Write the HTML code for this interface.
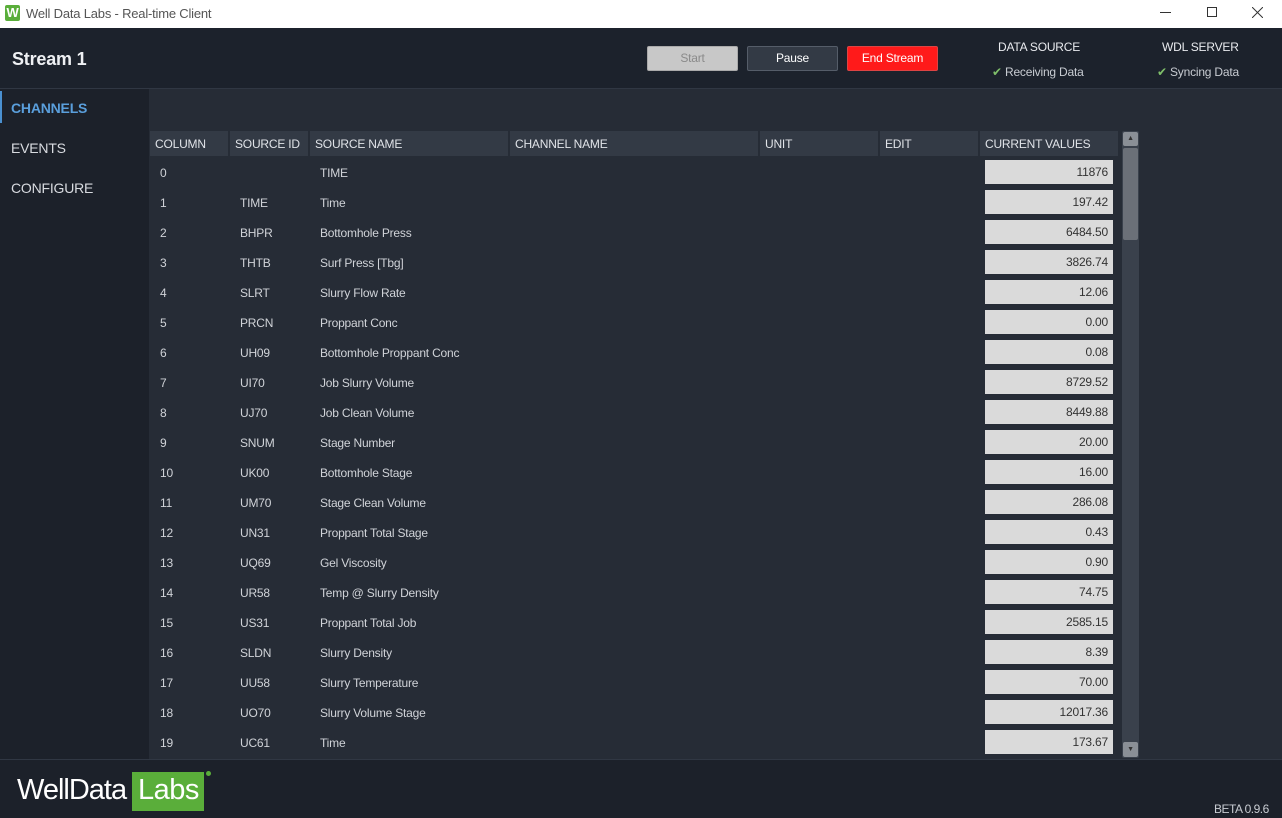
<!DOCTYPE html>
<html><head><style>
*{margin:0;padding:0;box-sizing:border-box}
body{width:1282px;height:818px;overflow:hidden;font-family:"Liberation Sans",sans-serif;background:#262c36;position:relative;color:#d8dbe0;letter-spacing:-0.2px}
.abs{position:absolute}
#tb{left:0;top:0;width:1282px;height:28px;background:#fff;color:#555;font-size:13px}
#hd{left:0;top:28px;width:1282px;height:61px;background:#1c222c;border-bottom:1px solid #303743}
#sb{left:0;top:89px;width:149px;height:671px;background:#1c212a}
#ft{left:0;top:759px;width:1282px;height:59px;background:#1c212a;border-top:1px solid #303743}
.btn{top:46px;height:25px;width:91px;font-size:12px;text-align:center;line-height:23px;border-radius:2px}
.th{top:131px;height:25px;background:#333a45;font-size:12px;line-height:26px;padding-left:5px;color:#e0e3e8}
.c{font-size:12px;color:#d0d3d8}
.v{left:985px;width:128px;height:24px;background:#dadada;color:#333;font-size:12px;text-align:right;padding-right:5px;line-height:25px}
</style></head><body>
<div id="tb" class="abs">
<div class="abs" style="left:5px;top:5px;width:15px;height:16px;background:#5aae3a;color:#fff;font-weight:bold;font-size:13px;text-align:center;line-height:16px;border-radius:2px">W</div>
<div class="abs" style="left:26px;top:6px">Well Data Labs - Real-time Client</div>
<div class="abs" style="left:1160px;top:12px;width:11px;height:1px;background:#333"></div>
<div class="abs" style="left:1207px;top:7px;width:10px;height:10px;border:1px solid #333"></div>
<svg class="abs" style="left:1252px;top:7px" width="11" height="11"><path d="M0 0L11 11M11 0L0 11" stroke="#333" stroke-width="1"/></svg>
</div>
<div id="hd" class="abs">
<div class="abs" style="left:12px;top:21px;font-size:18px;font-weight:bold;color:#eef0f3">Stream 1</div>
</div>
<div class="abs btn" style="left:647px;background:#c8c8c8;color:#8a8a8a;border:1px solid #aaa">Start</div>
<div class="abs btn" style="left:747px;background:#333a45;color:#fff;border:1px solid #555d69">Pause</div>
<div class="abs btn" style="left:847px;background:#ff1a1a;color:#fff;border:1px solid #d44">End Stream</div>
<div class="abs" style="left:998px;top:40px;font-size:12px;color:#e8eaee">DATA SOURCE</div>
<div class="abs" style="left:992px;top:65px;font-size:12px;color:#c8ccd2"><span style="color:#7fbf6a">✔</span> Receiving Data</div>
<div class="abs" style="left:1162px;top:40px;font-size:12px;color:#e8eaee">WDL SERVER</div>
<div class="abs" style="left:1157px;top:65px;font-size:12px;color:#c8ccd2"><span style="color:#7fbf6a">✔</span> Syncing Data</div>
<div id="sb" class="abs">
<div class="abs" style="left:0;top:2px;width:2px;height:32px;background:#4a90d0"></div>
<div class="abs" style="left:11px;top:11px;font-size:14px;font-weight:bold;color:#5a9fdc">CHANNELS</div>
<div class="abs" style="left:11px;top:51px;font-size:14px;color:#d8dbe0">EVENTS</div>
<div class="abs" style="left:11px;top:91px;font-size:14px;color:#d8dbe0">CONFIGURE</div>
</div>
<div class="abs th" style="left:150px;width:78px">COLUMN</div>
<div class="abs th" style="left:230px;width:78px">SOURCE ID</div>
<div class="abs th" style="left:310px;width:198px">SOURCE NAME</div>
<div class="abs th" style="left:510px;width:248px">CHANNEL NAME</div>
<div class="abs th" style="left:760px;width:118px">UNIT</div>
<div class="abs th" style="left:880px;width:98px">EDIT</div>
<div class="abs th" style="left:980px;width:138px">CURRENT VALUES</div>
<div class="abs" style="left:1122px;top:131px;width:17px;height:627px;background:#3a414c;border-radius:2px"></div>
<div class="abs" style="left:1123px;top:132px;width:15px;height:14px;background:#8a8f96;border-radius:2px;font-size:7px;text-align:center;line-height:14px;color:#333">▲</div>
<div class="abs" style="left:1123px;top:148px;width:15px;height:92px;background:#6b7078;border-radius:2px"></div>
<div class="abs" style="left:1123px;top:742px;width:15px;height:15px;background:#8a8f96;border-radius:2px;font-size:7px;text-align:center;line-height:15px;color:#333">▼</div>
<div id="rows"></div>
<div id="ft" class="abs">
<div class="abs" style="left:17px;top:14px;font-size:29px;color:#fff;letter-spacing:-1px">WellData</div>
<div class="abs" style="left:132px;top:12px;width:72px;height:39px;background:#5aae3a;color:#fff;font-size:29px;padding-left:6px;line-height:37px;letter-spacing:-0.5px">Labs</div>
<div class="abs" style="left:206px;top:11px;width:5px;height:5px;border-radius:50%;background:#5aae3a"></div>
<div class="abs" style="left:1214px;top:42px;font-size:12px;color:#c8ccd2;letter-spacing:-0.5px">BETA 0.9.6</div>
</div>
<script>
var d=[["0","","TIME","11876"],["1","TIME","Time","197.42"],["2","BHPR","Bottomhole Press","6484.50"],["3","THTB","Surf Press [Tbg]","3826.74"],["4","SLRT","Slurry Flow Rate","12.06"],["5","PRCN","Proppant Conc","0.00"],["6","UH09","Bottomhole Proppant Conc","0.08"],["7","UI70","Job Slurry Volume","8729.52"],["8","UJ70","Job Clean Volume","8449.88"],["9","SNUM","Stage Number","20.00"],["10","UK00","Bottomhole Stage","16.00"],["11","UM70","Stage Clean Volume","286.08"],["12","UN31","Proppant Total Stage","0.43"],["13","UQ69","Gel Viscosity","0.90"],["14","UR58","Temp @ Slurry Density","74.75"],["15","US31","Proppant Total Job","2585.15"],["16","SLDN","Slurry Density","8.39"],["17","UU58","Slurry Temperature","70.00"],["18","UO70","Slurry Volume Stage","12017.36"],["19","UC61","Time","173.67"]];
var h="";d.forEach(function(r,i){var y=172+30*i;
h+='<div class="abs c" style="left:160px;top:'+(y-6)+'px">'+r[0]+'</div><div class="abs c" style="left:240px;top:'+(y-6)+'px">'+r[1]+'</div><div class="abs c" style="left:320px;top:'+(y-6)+'px">'+r[2]+'</div><div class="abs v" style="top:'+(y-12)+'px">'+r[3]+'</div>';});
document.getElementById("rows").innerHTML=h;
</script>
</body></html>
